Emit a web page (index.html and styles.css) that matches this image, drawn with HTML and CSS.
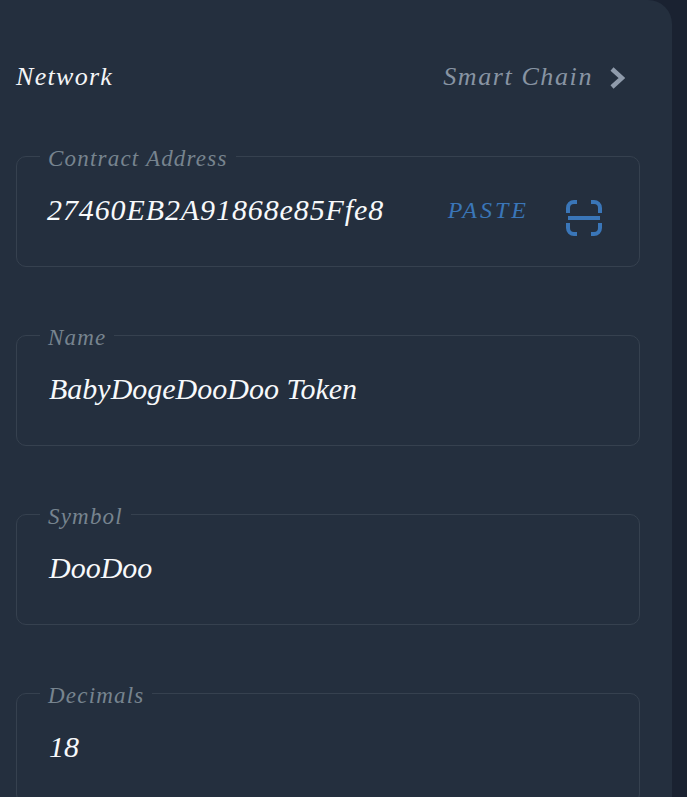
FILE: index.html
```html
<!DOCTYPE html>
<html lang="en">
<head>
    <meta charset="UTF-8">
    <meta name="viewport" content="width=device-width, initial-scale=1.0">
    <title>Add Custom Token</title>
    <link rel="stylesheet" href="styles.css">
</head>
<body>
    <div class="panel">
        <div class="network-row">
            <span class="network-label">Network</span>
            <span class="network-value">Smart Chain</span>
            <svg class="chevron" viewBox="0 0 16 24" width="16" height="24">
                <path d="M3 3 L13 12 L3 21"></path>
            </svg>
        </div>

        <fieldset class="field">
            <legend>Contract Address</legend>
            <div class="field-row">
                <span class="field-value address">27460EB2A91868e85Ffe8</span>
                <span class="paste">PASTE</span>
                <svg class="scan" viewBox="0 0 36 36" width="36" height="36">
                    <path d="M2 13 V8 A6 6 0 0 1 8 2 H11"></path>
                    <path d="M25 2 H28 A6 6 0 0 1 34 8 V13"></path>
                    <path d="M2 23 V28 A6 6 0 0 0 8 34 H11"></path>
                    <path d="M25 34 H28 A6 6 0 0 0 34 28 V23"></path>
                    <path d="M2 18 H34"></path>
                </svg>
            </div>
        </fieldset>

        <fieldset class="field">
            <legend>Name</legend>
            <div class="field-row">
                <span class="field-value">BabyDogeDooDoo Token</span>
            </div>
        </fieldset>

        <fieldset class="field">
            <legend>Symbol</legend>
            <div class="field-row">
                <span class="field-value">DooDoo</span>
            </div>
        </fieldset>

        <fieldset class="field">
            <legend>Decimals</legend>
            <div class="field-row">
                <span class="field-value">18</span>
            </div>
        </fieldset>
    </div>
</body>
</html>
```

FILE: styles.css
```css
html, body {
    height: 100%;
}

body {
    margin: 0;
    background-color: #1a2231;
    font-family: "Liberation Serif", serif;
    font-style: italic;
    overflow: hidden;
}

.panel {
    box-sizing: border-box;
    width: 672px;
    height: 797px;
    padding: 60px 32px 0 16px;
    background-color: #242f3e;
    border-top-right-radius: 24px;
    overflow: hidden;
}

.network-row {
    display: flex;
    align-items: center;
    height: 34px;
    margin-bottom: 49px;
}

.network-label {
    flex: 1;
    font-size: 26px;
    letter-spacing: 1.3px;
    color: #f4f6f8;
}

.network-value {
    font-size: 26px;
    letter-spacing: 1.6px;
    color: #8894a3;
}

.chevron {
    margin: 2px 15px 0 16px;
    fill: none;
    stroke: #8f9bab;
    stroke-width: 4.5;
}

.field {
    box-sizing: border-box;
    height: 124px;
    margin: 0 0 55px;
    padding: 0 37px 0 24px;
    min-width: 0;
    border: 1px solid #36414f;
    border-radius: 10px;
}

.field legend {
    padding: 4px 8px 0;
    margin-left: -1px;
    font-size: 23px;
    line-height: 23px;
    letter-spacing: 1.2px;
    color: #77848f;
}

.field-row {
    display: flex;
    align-items: center;
    height: 36px;
    margin-top: 22px;
}

.field-value {
    flex: 1;
    margin-left: 8px;
    font-size: 30px;
    color: #f7f9fb;
}

.field-value.address {
    margin-left: 6px;
    letter-spacing: 0.9px;
}

.paste {
    margin-right: 37px;
    font-size: 24px;
    letter-spacing: 3px;
    color: #3a76b8;
}

.scan {
    margin-top: 16px;
    fill: none;
    stroke: #3a76b8;
    stroke-width: 4;
}
```
